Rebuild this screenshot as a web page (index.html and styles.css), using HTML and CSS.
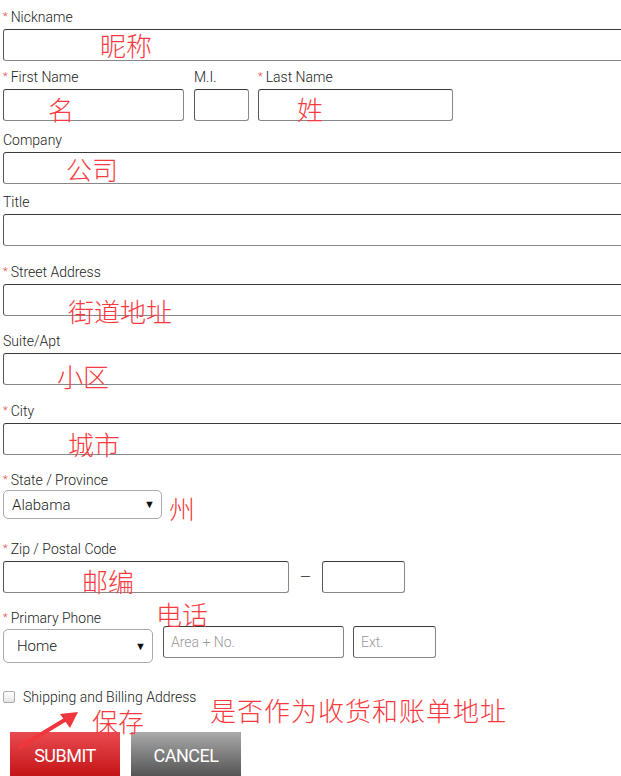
FILE: index.html
```html
<!DOCTYPE html>
<html lang="en">
<head>
  <meta charset="UTF-8" />
  <title>Address Form</title>
  <link rel="stylesheet" href="styles.css">
</head>
<body>
  <div class="page">
    <form class="form">
      <div class="group g-nick">
        <label><span class="req">*</span>Nickname</label>
        <input type="text" class="box full">
      </div>

      <div class="group g-name row">
        <div class="col">
          <label><span class="req">*</span>First Name</label>
          <input type="text" class="box w-first">
        </div>
        <div class="col">
          <label>M.I.</label>
          <input type="text" class="box w-mi">
        </div>
        <div class="col">
          <label><span class="req">*</span>Last Name</label>
          <input type="text" class="box w-last">
        </div>
      </div>

      <div class="group g-company">
        <label>Company</label>
        <input type="text" class="box full">
      </div>

      <div class="group g-title">
        <label>Title</label>
        <input type="text" class="box full">
      </div>

      <div class="group g-street">
        <label><span class="req">*</span>Street Address</label>
        <input type="text" class="box full">
      </div>

      <div class="group g-suite">
        <label>Suite/Apt</label>
        <input type="text" class="box full">
      </div>

      <div class="group g-city">
        <label><span class="req">*</span>City</label>
        <input type="text" class="box full">
      </div>

      <div class="group g-state">
        <label class="lbl-tight"><span class="req">*</span>State / Province</label>
        <div class="select w-state">
          <span>Alabama</span><span class="caret">&#9660;</span>
        </div>
      </div>

      <div class="group g-zip">
        <label><span class="req">*</span>Zip / Postal Code</label>
        <div class="row zip-row">
          <input type="text" class="box w-zip">
          <span class="dash">&mdash;</span>
          <input type="text" class="box w-zip4">
        </div>
      </div>

      <div class="group g-phone">
        <label class="lbl-tight2"><span class="req">*</span>Primary Phone</label>
        <div class="row phone-row">
          <div class="select tall w-phone">
            <span>Home</span><span class="caret">&#9660;</span>
          </div>
          <input type="text" class="box up w-area" placeholder="Area + No.">
          <input type="text" class="box up w-ext" placeholder="Ext.">
        </div>
      </div>

      <div class="check-row">
        <span class="check"></span>
        <span>Shipping and Billing Address</span>
      </div>

      <div class="buttons">
        <button type="button" class="btn btn-submit">SUBMIT</button>
        <button type="button" class="btn btn-cancel">CANCEL</button>
      </div>
    </form>

    <!-- red notes laid over the form -->
    <span class="note n-nick">昵称</span>
    <span class="note n-first">名</span>
    <span class="note n-last">姓</span>
    <span class="note n-company">公司</span>
    <span class="note n-street">街道地址</span>
    <span class="note n-suite">小区</span>
    <span class="note n-city">城市</span>
    <span class="note n-state">州</span>
    <span class="note n-zip">邮编</span>
    <span class="note n-phone">电话</span>
    <span class="note n-save">保存</span>
    <span class="note n-ship">是否作为收货和账单地址</span>
    <svg class="arrow" width="70" height="40" viewBox="0 0 70 40">
      <line x1="4" y1="37" x2="52" y2="8" stroke="#f0363c" stroke-width="4" stroke-linecap="round"/>
      <polygon points="62,2 44,4 54,18" fill="#f0363c"/>
    </svg>
  </div>
</body>
</html>
```

FILE: styles.css
```css
html, body { margin: 0; padding: 0; background: #fff; overflow: hidden; }
body { font-family: Roboto, "Liberation Sans", sans-serif; color: #333; font-size: 14px; font-weight: 300; }
.page { position: relative; width: 621px; height: 776px; overflow: hidden; }
.form { padding: 8px 0 0 3px; }

label { display: block; line-height: 18px; height: 18px; margin-bottom: 3px; color: #222; font-size: 14px; white-space: nowrap; }
.lbl-tight { margin-bottom: 1px; }
.lbl-tight2 { margin-bottom: 2px; }
.req { color: #e8474b; font-size: 11px; margin-right: 3px; vertical-align: 2px; }

.row { display: flex; }
.col { display: flex; flex-direction: column; }
.g-name .col + .col { margin-left: 10px; }
.g-name .col:last-child { margin-left: 9px; }

.box {
  display: block; box-sizing: border-box; height: 32px; margin: 0;
  border: 1px solid; border-color: #3a3a3a #888 #888 #555;
  border-radius: 3px; background: #fff;
  font-family: Roboto, sans-serif; font-weight: 300; font-size: 14px; padding: 0 8px;
}
.box::placeholder { color: #999; }
.full { width: 660px; }
.w-first { width: 181px; }
.w-mi { width: 55px; }
.w-last { width: 195px; }
.w-zip { width: 286px; }
.w-zip4 { width: 83px; }
.w-area { width: 181px; margin-left: 10px; }
.w-ext { width: 83px; margin-left: 9px; }
.up { margin-top: -3px; padding: 0 7px; }

.g-name { margin-top: 7px; }
.g-company { margin-top: 10px; }
.g-title { margin-top: 9px; }
.g-street { margin-top: 17px; }
.g-suite { margin-top: 16px; }
.g-city { margin-top: 17px; }
.g-state { margin-top: 16px; }
.g-zip { margin-top: 21px; }
.g-phone { margin-top: 16px; }

.select {
  box-sizing: border-box; height: 29px; display: flex; align-items: center;
  justify-content: space-between; border: 1px solid #aaa; border-radius: 5px;
  padding: 0 6px 0 8px; color: #222; background: #fff; font-size: 15px;
}
.select.tall { height: 34px; padding: 0 6px 0 13px; }
.caret { font-size: 11px; color: #111; }
.w-state { width: 159px; }
.w-phone { width: 150px; }

.zip-row { align-items: center; }
.dash { width: 33px; text-align: center; color: #222; font-size: 14px; }

.check-row { display: flex; align-items: center; margin-top: 25px; height: 18px; color: #222; }
.check {
  width: 10px; height: 10px; margin: 0 8px 0 0;
  border: 1px solid #aaa; border-radius: 2px; background: linear-gradient(#fff, #e6e6e6);
}

.buttons { display: flex; margin: 26px 0 0 7px; }
.btn {
  width: 110px; height: 52px; border: none; color: #fff;
  font-family: Roboto, sans-serif; font-size: 18px; letter-spacing: -0.5px;
  padding: 0 0 6px; cursor: pointer;
}
.btn-submit { background: linear-gradient(#ea4b50, #bd0a0d); }
.btn-cancel { margin-left: 11px; background: linear-gradient(#aaa, #444); }

.note {
  position: absolute; color: #f83a40; font-size: 26px; line-height: 26px;
  font-family: "Noto Sans CJK SC", sans-serif; font-weight: 300; white-space: nowrap;
}
.n-nick { left: 100px; top: 32px; }
.n-first { left: 48px; top: 96px; }
.n-last { left: 297px; top: 96px; }
.n-company { left: 66px; top: 156px; }
.n-street { left: 68px; top: 298px; }
.n-suite { left: 57px; top: 363px; }
.n-city { left: 68px; top: 431px; }
.n-state { left: 169px; top: 495px; }
.n-zip { left: 82px; top: 568px; }
.n-phone { left: 156px; top: 601px; }
.n-save { left: 92px; top: 708px; }
.n-ship { left: 210px; top: 697px; letter-spacing: 1px; }
.arrow { position: absolute; left: 16px; top: 710px; }
```
